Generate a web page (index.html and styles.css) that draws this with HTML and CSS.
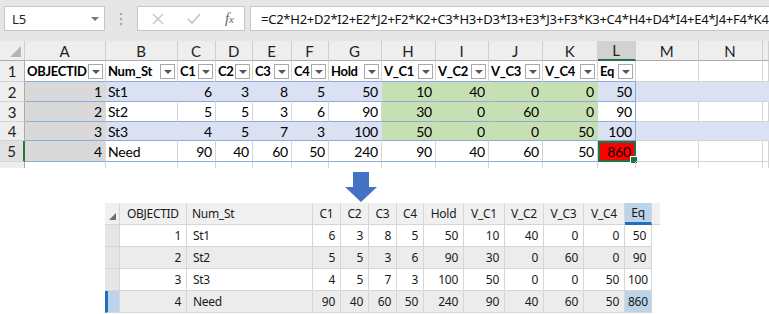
FILE: index.html
```html
<!DOCTYPE html>
<html lang="en">
<head>
    <meta charset="UTF-8">
    <title>Table</title>
    <link rel="stylesheet" href="styles.css">
</head>
<body>
    <div class="ribbon">
        <div class="namebox"><span>L5</span><span class="caret"></span></div>
        <div class="grip">
            <svg width="4" height="16" viewBox="0 0 4 16"><circle cx="2" cy="3" r="1.2" fill="#a8a8a8"/><circle cx="2" cy="8" r="1.2" fill="#a8a8a8"/><circle cx="2" cy="13" r="1.2" fill="#a8a8a8"/></svg>
        </div>
        <div class="fxbox">
            <svg width="12" height="12" viewBox="0 0 12 12"><path d="M1 1 L11 11 M11 1 L1 11" stroke="#c4c4c4" stroke-width="1.4"/></svg>
            <svg width="14" height="12" viewBox="0 0 14 12"><path d="M1 6 L5 10 L13 1" stroke="#c4c4c4" stroke-width="1.6" fill="none"/></svg>
            <span class="fx"><i>f</i><span>x</span></span>
        </div>
        <div class="formula">=C2*H2+D2*I2+E2*J2+F2*K2+C3*H3+D3*I3+E3*J3+F3*K3+C4*H4+D4*I4+E4*J4+F4*K4</div>
    </div>

    <div class="sheet">
        <table class="grid">
            <colgroup>
                <col style="width:25px"><col style="width:81px"><col style="width:72px"><col style="width:38px">
                <col style="width:37px"><col style="width:39px"><col style="width:37px"><col style="width:53px">
                <col style="width:54px"><col style="width:53px"><col style="width:54px"><col style="width:55px">
                <col style="width:38px"><col style="width:63px"><col style="width:64px"><col style="width:6px">
            </colgroup>
            <tr class="letters">
                <th class="corner"></th><th>A</th><th>B</th><th>C</th><th>D</th><th>E</th><th>F</th><th>G</th>
                <th>H</th><th>I</th><th>J</th><th>K</th><th class="sel">L</th><th>M</th><th>N</th><th></th>
            </tr>
            <tr class="r1">
                <th class="num">1</th>
                <td class="hd">OBJECTID<span class="dd"></span></td>
                <td class="hd">Num_St<span class="dd"></span></td>
                <td class="hd">C1<span class="dd"></span></td>
                <td class="hd">C2<span class="dd"></span></td>
                <td class="hd">C3<span class="dd"></span></td>
                <td class="hd">C4<span class="dd"></span></td>
                <td class="hd">Hold<span class="dd"></span></td>
                <td class="hd">V_C1<span class="dd"></span></td>
                <td class="hd">V_C2<span class="dd"></span></td>
                <td class="hd">V_C3<span class="dd"></span></td>
                <td class="hd">V_C4<span class="dd"></span></td>
                <td class="hd">Eq<span class="dd"></span></td>
                <td class="out"></td><td class="out"></td><td class="out"></td>
            </tr>
            <tr class="r2 band">
                <th class="num">2</th>
                <td class="id">1</td><td class="txt">St1</td><td>6</td><td>3</td><td>8</td><td>5</td><td>50</td>
                <td class="g">10</td><td class="g">40</td><td class="g">0</td><td class="g">0</td><td>50</td>
                <td class="out"></td><td class="out"></td><td class="out"></td>
            </tr>
            <tr class="r3">
                <th class="num">3</th>
                <td class="id">2</td><td class="txt">St2</td><td>5</td><td>5</td><td>3</td><td>6</td><td>90</td>
                <td class="g">30</td><td class="g">0</td><td class="g">60</td><td class="g">0</td><td>90</td>
                <td class="out"></td><td class="out"></td><td class="out"></td>
            </tr>
            <tr class="r4 band">
                <th class="num">4</th>
                <td class="id">3</td><td class="txt">St3</td><td>4</td><td>5</td><td>7</td><td>3</td><td>100</td>
                <td class="g">50</td><td class="g">0</td><td class="g">0</td><td class="g">50</td><td>100</td>
                <td class="out"></td><td class="out"></td><td class="out"></td>
            </tr>
            <tr class="r5">
                <th class="num cur">5</th>
                <td class="id">4</td><td class="txt">Need</td><td>90</td><td>40</td><td>60</td><td>50</td><td>240</td>
                <td>90</td><td>40</td><td>60</td><td>50</td><td class="red"><span class="handle"></span>860</td>
                <td class="out"></td><td class="out"></td><td class="out"></td>
            </tr>
            <tr class="r6">
                <th class="num"></th>
                <td></td><td></td><td></td><td></td><td></td><td></td><td></td>
                <td></td><td></td><td></td><td></td><td></td><td></td><td></td><td></td>
            </tr>
        </table>
    </div>

    <div class="arrow">
        <svg width="34" height="31" viewBox="0 0 34 31"><path d="M9 0 H25 V15 H33 L17 30 L1 15 H9 Z" fill="#4472c4"/></svg>
    </div>

    <table class="attr">
        <colgroup>
            <col style="width:15px"><col style="width:67px"><col style="width:126px"><col style="width:28px">
            <col style="width:28px"><col style="width:28px"><col style="width:27px"><col style="width:40px">
            <col style="width:41px"><col style="width:39px"><col style="width:40px"><col style="width:41px">
            <col style="width:27px"><col style="width:8px">
        </colgroup>
        <tr class="head">
            <th class="corner2"></th><th class="left">OBJECTID</th><th class="left">Num_St</th>
            <th>C1</th><th>C2</th><th>C3</th><th>C4</th><th>Hold</th>
            <th>V_C1</th><th>V_C2</th><th>V_C3</th><th>V_C4</th><th class="active">Eq</th><th class="tail"></th>
        </tr>
        <tr>
            <th class="rh"></th><td>1</td><td class="txt">St1</td><td>6</td><td>3</td><td>8</td><td>5</td><td>50</td>
            <td>10</td><td>40</td><td>0</td><td>0</td><td>50</td><td class="none"></td>
        </tr>
        <tr class="alt">
            <th class="rh"></th><td>2</td><td class="txt">St2</td><td>5</td><td>5</td><td>3</td><td>6</td><td>90</td>
            <td>30</td><td>0</td><td>60</td><td>0</td><td>90</td><td class="none"></td>
        </tr>
        <tr>
            <th class="rh"></th><td>3</td><td class="txt">St3</td><td>4</td><td>5</td><td>7</td><td>3</td><td>100</td>
            <td>50</td><td>0</td><td>0</td><td>50</td><td>100</td><td class="none"></td>
        </tr>
        <tr class="alt">
            <th class="rh picked"></th><td>4</td><td class="txt">Need</td><td>90</td><td>40</td><td>60</td><td>50</td><td>240</td>
            <td>90</td><td>40</td><td>60</td><td>50</td><td class="hit">860</td><td class="none"></td>
        </tr>
    </table>
</body>
</html>
```

FILE: styles.css
```css
body {
    margin: 0;
    background-color: #fff;
    width: 769px;
    height: 314px;
    overflow: hidden;
}

/* formula bar */
.ribbon {
    display: flex;
    align-items: flex-start;
    height: 41px;
    box-sizing: border-box;
    padding: 6px 0 0 4px;
    background-color: #e6e6e6;
    font-family: "Noto Sans", sans-serif;
}
.namebox {
    width: 101px;
    height: 25px;
    box-sizing: border-box;
    border: 1px solid #c6c6c6;
    background-color: #fff;
    display: flex;
    align-items: center;
    justify-content: space-between;
    padding: 0 5px 0 7px;
    font-size: 13px;
    color: #222;
}
.caret {
    width: 0;
    height: 0;
    border-left: 4px solid transparent;
    border-right: 4px solid transparent;
    border-top: 4px solid #777;
}
.grip {
    width: 32px;
    height: 25px;
    display: flex;
    align-items: center;
    justify-content: center;
}
.fxbox {
    width: 108px;
    height: 25px;
    box-sizing: border-box;
    border: 1px solid #c6c6c6;
    background-color: #fff;
    display: flex;
    align-items: center;
    justify-content: space-between;
    padding: 0 10px 0 14px;
}
.fx {
    font-family: "Liberation Serif", serif;
    font-size: 14px;
    color: #666;
}
.fx i {
    font-size: 15px;
}
.fx span {
    font-style: italic;
    font-size: 11px;
}
.formula {
    flex: 1;
    margin-left: 5px;
    height: 25px;
    box-sizing: border-box;
    border: 1px solid #c6c6c6;
    border-right: none;
    background-color: #fff;
    padding: 3px 0 0 10px;
    font-size: 13px;
    letter-spacing: -0.25px;
    color: #111;
    white-space: nowrap;
    overflow: hidden;
}

/* worksheet */
.sheet {
    height: 127px;
    overflow: hidden;
}
.grid {
    table-layout: fixed;
    width: 769px;
    border-collapse: separate;
    border-spacing: 0;
    font-family: Lato, sans-serif;
    font-size: 14px;
    letter-spacing: -0.2px;
    color: #000;
}
.grid td, .grid th {
    padding: 0 3px 0 2px;
    box-sizing: border-box;
    border-right: 1px solid #d4d4d4;
    border-bottom: 1px solid #8ea9db;
    white-space: nowrap;
    overflow: hidden;
    text-align: right;
    position: relative;
}
.grid .letters th {
    height: 20px;
    background-color: #eeeeee;
    border-right: 1px solid #cfcfcf;
    border-bottom: 1px solid #ababab;
    font-weight: normal;
    text-align: center;
    color: #222;
    font-size: 15px;
}
.grid .letters th.sel {
    background-color: #d2d2d2;
    border-bottom: 2px solid #217346;
}
.grid .corner::after {
    content: "";
    position: absolute;
    right: 3px;
    bottom: 3px;
    border-left: 11px solid transparent;
    border-bottom: 11px solid #b5b5b5;
}
.grid .num {
    background-color: #eeeeee;
    border-right: 1px solid #ababab;
    border-bottom: 1px solid #d4d4d4;
    font-weight: normal;
    text-align: center;
    font-size: 15px;
    color: #222;
    padding: 0;
}
.grid .num.cur {
    background-color: #e1e1e1;
    border-right: 2px solid #217346;
}
.r1 { height: 21px; }
.r2, .r3 { height: 20px; }
.r4, .r5 { height: 19px; }
.r6 { height: 20px; }
.grid .hd {
    font-weight: bold;
    font-size: 13px;
    letter-spacing: -0.3px;
    text-align: left;
}
.dd {
    position: absolute;
    right: 2px;
    top: 3px;
    width: 15px;
    height: 15px;
    box-sizing: border-box;
    border: 1px solid #a9a9a9;
    background-color: #fff;
}
.dd::after {
    content: "";
    position: absolute;
    left: 3px;
    top: 5px;
    border-left: 4px solid transparent;
    border-right: 4px solid transparent;
    border-top: 4px solid #555;
}
.grid .id {
    background-color: #d9d9d9;
    border-right-color: #d9d9d9;
}
.grid .txt {
    text-align: left;
}
.grid .band td {
    background-color: #d9e1f2;
    border-right-color: #d9e1f2;
}
.grid .band td.id {
    background-color: #d9d9d9;
    border-right-color: #d9d9d9;
}
.grid td.g, .grid .band td.g {
    background-color: #c6e0b4;
    border-right-color: #c6e0b4;
}
.grid td.out {
    border-bottom: 1px solid #d4d4d4;
}
.grid .r6 td {
    border-bottom: none;
}
.grid .r2 td:nth-child(13), .grid .r3 td:nth-child(13), .grid .r4 td:nth-child(13) {
    border-right-color: #8ea9db;
}
.grid td.red {
    background-color: #ff0000;
    border: 2px solid #217346;
    overflow: visible;
}
.handle {
    position: absolute;
    right: -4px;
    bottom: -4px;
    width: 6px;
    height: 6px;
    background-color: #217346;
    border: 1px solid #fff;
}

/* arrow */
.arrow {
    height: 35px;
    padding: 4px 0 0 344px;
    box-sizing: border-box;
}

/* attribute table */
.attr {
    margin-left: 105px;
    table-layout: fixed;
    width: 555px;
    border-collapse: separate;
    border-spacing: 0;
    font-family: "Noto Sans", sans-serif;
    font-size: 12px;
    letter-spacing: -0.3px;
    color: #1a1a1a;
}
.attr th, .attr td {
    box-sizing: border-box;
    padding: 0 5px 0 3px;
    white-space: nowrap;
    overflow: hidden;
}
.attr .head th {
    height: 21px;
    background-color: #f0f0f0;
    border-right: 1px solid #d6d6d6;
    border-bottom: 1px solid #d6d6d6;
    font-weight: normal;
    text-align: center;
    padding: 0;
}
.attr .head th.left {
    text-align: left;
    padding-left: 7px;
}
.attr .head th.left + th.left {
    padding-left: 5px;
}
.attr .head th.active {
    background-color: #bcd4ea;
    border-bottom: 3px solid #1c6fc1;
}
.attr .head th.tail {
    border-right: none;
}
.attr .corner2 {
    position: relative;
}
.attr .corner2::after {
    content: "";
    position: absolute;
    left: 4px;
    bottom: 4px;
    border-left: 7px solid transparent;
    border-bottom: 7px solid #707070;
}
.attr tr {
    height: 22px;
}
.attr td {
    text-align: right;
    border-right: 1px solid #d6d6d6;
    border-bottom: 1px solid #d6d6d6;
    background-color: #fff;
}
.attr td.txt {
    text-align: left;
    padding-left: 6px;
}
.attr .alt td {
    background-color: #ececec;
}
.attr th.rh {
    background-color: #e6e6e6;
    border-right: 1px solid #d6d6d6;
    border-bottom: 1px solid #d6d6d6;
}
.attr th.rh.picked {
    background-color: #bcd4ea;
    border-left: 3px solid #1c6fc1;
}
.attr td.hit, .attr .alt td.hit {
    background-color: #bcd4ea;
    text-align: left;
    padding-left: 3px;
}
.attr td.none, .attr .alt td.none {
    background-color: transparent;
    border: none;
}
```
